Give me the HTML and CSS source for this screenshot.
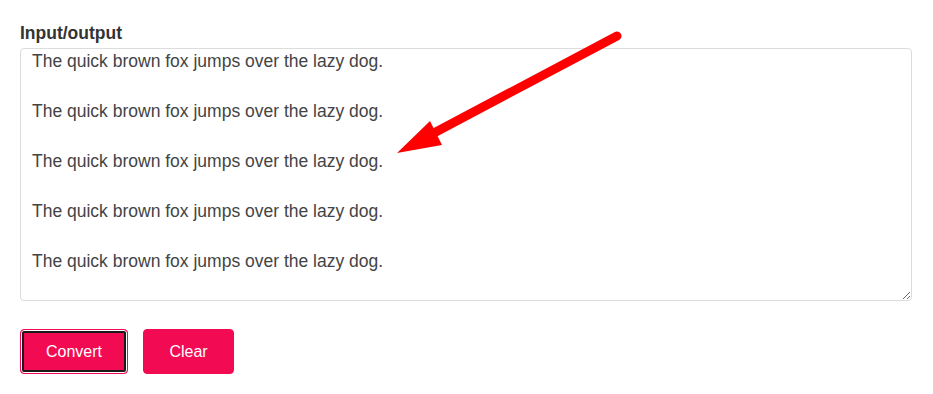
FILE: index.html
```html
<!DOCTYPE html>
<html>
<head>
<meta charset="utf-8">
<link rel="stylesheet" href="styles.css">
</head>
<body>
<div class="page">
  <label class="label" for="io">Input/output</label>
  <textarea id="io" class="io">The quick brown fox jumps over the lazy dog.

The quick brown fox jumps over the lazy dog.

The quick brown fox jumps over the lazy dog.

The quick brown fox jumps over the lazy dog.

The quick brown fox jumps over the lazy dog.</textarea>
  <div class="actions">
    <button class="btn btn-focus">Convert</button>
    <button class="btn">Clear</button>
  </div>
  <svg class="arrow" width="933" height="394" viewBox="0 0 933 394">
    <line x1="617" y1="36" x2="432" y2="134" stroke="#ff0000" stroke-width="9" stroke-linecap="round"/>
    <polygon points="397,153 430,121 442,145" fill="#ff0000"/>
  </svg>
</div>
</body>
</html>
```

FILE: styles.css
```css
html, body {
  margin: 0;
  padding: 0;
  background: #fff;
}
.page {
  position: relative;
  width: 933px;
  height: 394px;
  box-sizing: border-box;
  padding: 23px 21px 0 20px;
  display: flex;
  flex-direction: column;
  font-family: "Liberation Sans", Arial, sans-serif;
}
.label {
  font-weight: bold;
  font-size: 17.5px;
  color: #333;
  line-height: 21px;
  margin-bottom: 4px;
}
.io {
  display: block;
  width: 892px;
  height: 253px;
  box-sizing: border-box;
  border: 1px solid #dcdcdc;
  border-radius: 4px;
  padding: 0 11px;
  margin: 0;
  font-family: "Liberation Sans", Arial, sans-serif;
  font-size: 17.5px;
  line-height: 25px;
  color: #444;
  resize: both;
  overflow: hidden;
  outline: none;
}
.actions {
  display: flex;
  gap: 15px;
  margin-top: 28px;
}
.btn {
  height: 45px;
  box-sizing: border-box;
  border: 1px solid #f20a52;
  border-radius: 4px;
  background: #f20a52;
  color: #fff;
  font-family: "Liberation Sans", Arial, sans-serif;
  font-size: 16px;
  padding: 0;
}
.btn-focus {
  width: 108px;
  box-shadow: inset 0 0 0 1px #fff, inset 0 0 0 3px #1a1a1a;
}
.actions .btn:last-child {
  width: 91px;
}
.arrow {
  position: absolute;
  left: 0;
  top: 0;
  pointer-events: none;
}
```
